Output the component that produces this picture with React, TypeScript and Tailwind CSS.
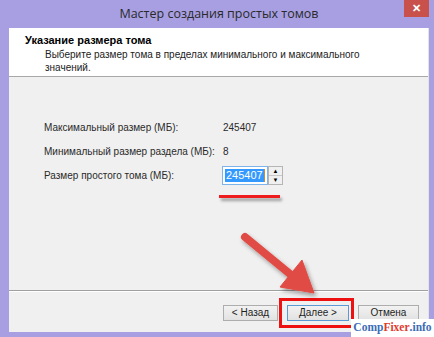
import React from "react";

const font = { fontFamily: '"Liberation Sans", Arial, sans-serif' };

function Btn({ children, w, def }: { children: React.ReactNode; w: string; def?: boolean }) {
  return (
    <div
      className={`${w} h-[16px] flex items-center justify-center text-[10px] leading-none text-[#1e1e1e] bg-gradient-to-b from-[#f2f2f2] to-[#e2e2e2] border ${
        def ? "border-[#5b9bd5]" : "border-[#adadad]"
      }`}
    >
      {children}
    </div>
  );
}

export default function App() {
  return (
    <div className="relative w-[434px] h-[337px] bg-[#a79fe2] overflow-hidden flex flex-col" style={font}>
      {/* title bar */}
      <div className="h-[28px] flex items-start shrink-0">
        <div className="w-[34px]" />
        <div className="flex-1 h-[28px] flex items-center justify-center text-[12.5px] text-[#2a2a2a]" style={{ fontFamily: '"Open Sans", "Noto Sans", sans-serif' }}>
          Мастер создания простых томов
        </div>
        <div className="w-[25px] h-[17px] bg-[#c9514c] flex items-center justify-center text-white text-[11px] font-bold leading-none">
          ✕
        </div>
        <div className="w-[5px]" />
      </div>
      {/* client */}
      <div className="flex-1 flex pr-[5px] pl-[9px] pb-[5px]">
        <div className="flex-1 flex flex-col bg-[#f0f0f0] border-r border-[#e3e3e3]">
          <div className="h-[49px] bg-white border-b border-[#a8a8a8] pl-[16px] pt-[6px] shrink-0">
            <div className="text-[11px] font-bold text-black leading-[13px]">Указание размера тома</div>
            <div className="pl-[20px] pt-[1px] text-[10px] text-[#222] leading-[13px] w-[350px]">
              Выберите размер тома в пределах минимального и максимального значений.
            </div>
          </div>
          <div className="h-[214px] border-b border-[#a0a0a0] shadow-[0_1px_0_#ffffff] pl-[35px] pt-[42px] text-[10px] text-[#2a2a2a] shrink-0 whitespace-nowrap">
            <div className="flex items-center h-[17px]">
              <div className="w-[179px]">Максимальный размер (МБ):</div>
              <div>245407</div>
            </div>
            <div className="flex items-center h-[17px] mt-[7px]">
              <div className="w-[179px]">Минимальный размер раздела (МБ):</div>
              <div>8</div>
            </div>
            <div className="flex items-center h-[19px] mt-[6px]">
              <div className="w-[178px]">Размер простого тома (МБ):</div>
              <div className="flex">
                <div className="w-[46px] h-[19px] bg-white border border-[#7eb4ea] flex items-center pl-[2px]">
                  <span className="bg-[#3399ff] text-white text-[11px] leading-[13px] px-[1px]">245407</span>
                  <span className="w-[1px] h-[13px] bg-[#d08a30]" />
                </div>
                <div className="w-[15px] h-[19px] bg-[#f0f0f0] border border-[#b5b5b5] flex flex-col">
                  <div className="flex-1 flex items-center justify-center border-b border-[#c8c8c8] text-[6px] leading-none text-black">▲</div>
                  <div className="flex-1 flex items-center justify-center text-[6px] leading-none text-black">▼</div>
                </div>
              </div>
            </div>
          </div>
          <div className="flex-1 flex items-start justify-end pt-[14px] pr-[9px] gap-[9px]">
            <Btn w="w-[55px]">&lt; Назад</Btn>
            <Btn w="w-[62px]" def>Далее &gt;</Btn>
            <Btn w="w-[61px]">Отмена</Btn>
          </div>
        </div>
      </div>

      {/* annotations */}
      <div className="absolute left-[219px] top-[195px] w-[61px] h-[3px] bg-[#ee1c1c] shadow-[2px_3px_3px_rgba(0,0,0,0.35)]" />
      <div className="absolute left-[279px] top-[298px] w-[75px] h-[30px] border-[3px] border-[#ee1111]" />
      <svg className="absolute left-0 top-0" width="434" height="337" viewBox="0 0 434 337">
        <defs>
          <filter id="sh" x="-20%" y="-20%" width="140%" height="140%">
            <feDropShadow dx="2" dy="3" stdDeviation="2" floodColor="#000" floodOpacity="0.35" />
          </filter>
        </defs>
        <g filter="url(#sh)" fill="#e04c44" stroke="#e04c44">
          <line x1="245" y1="237" x2="290" y2="274" strokeWidth="8" strokeLinecap="round" />
          <polygon points="314,293 302,260 280,287" strokeWidth="1" strokeLinejoin="round" />
        </g>
      </svg>
      <div
        className="absolute left-[351px] top-[319px] w-[83px] h-[18px] bg-white flex items-center justify-center text-[11.5px] font-bold leading-none"
        style={{ fontFamily: '"Liberation Serif", "DejaVu Serif", serif' }}
      >
        <span className="text-[#3b6db5]">Comp</span>
        <span className="text-[#e03a2e]">Fixer</span>
        <span className="text-[#3b6db5]">.info</span>
      </div>
    </div>
  );
}
